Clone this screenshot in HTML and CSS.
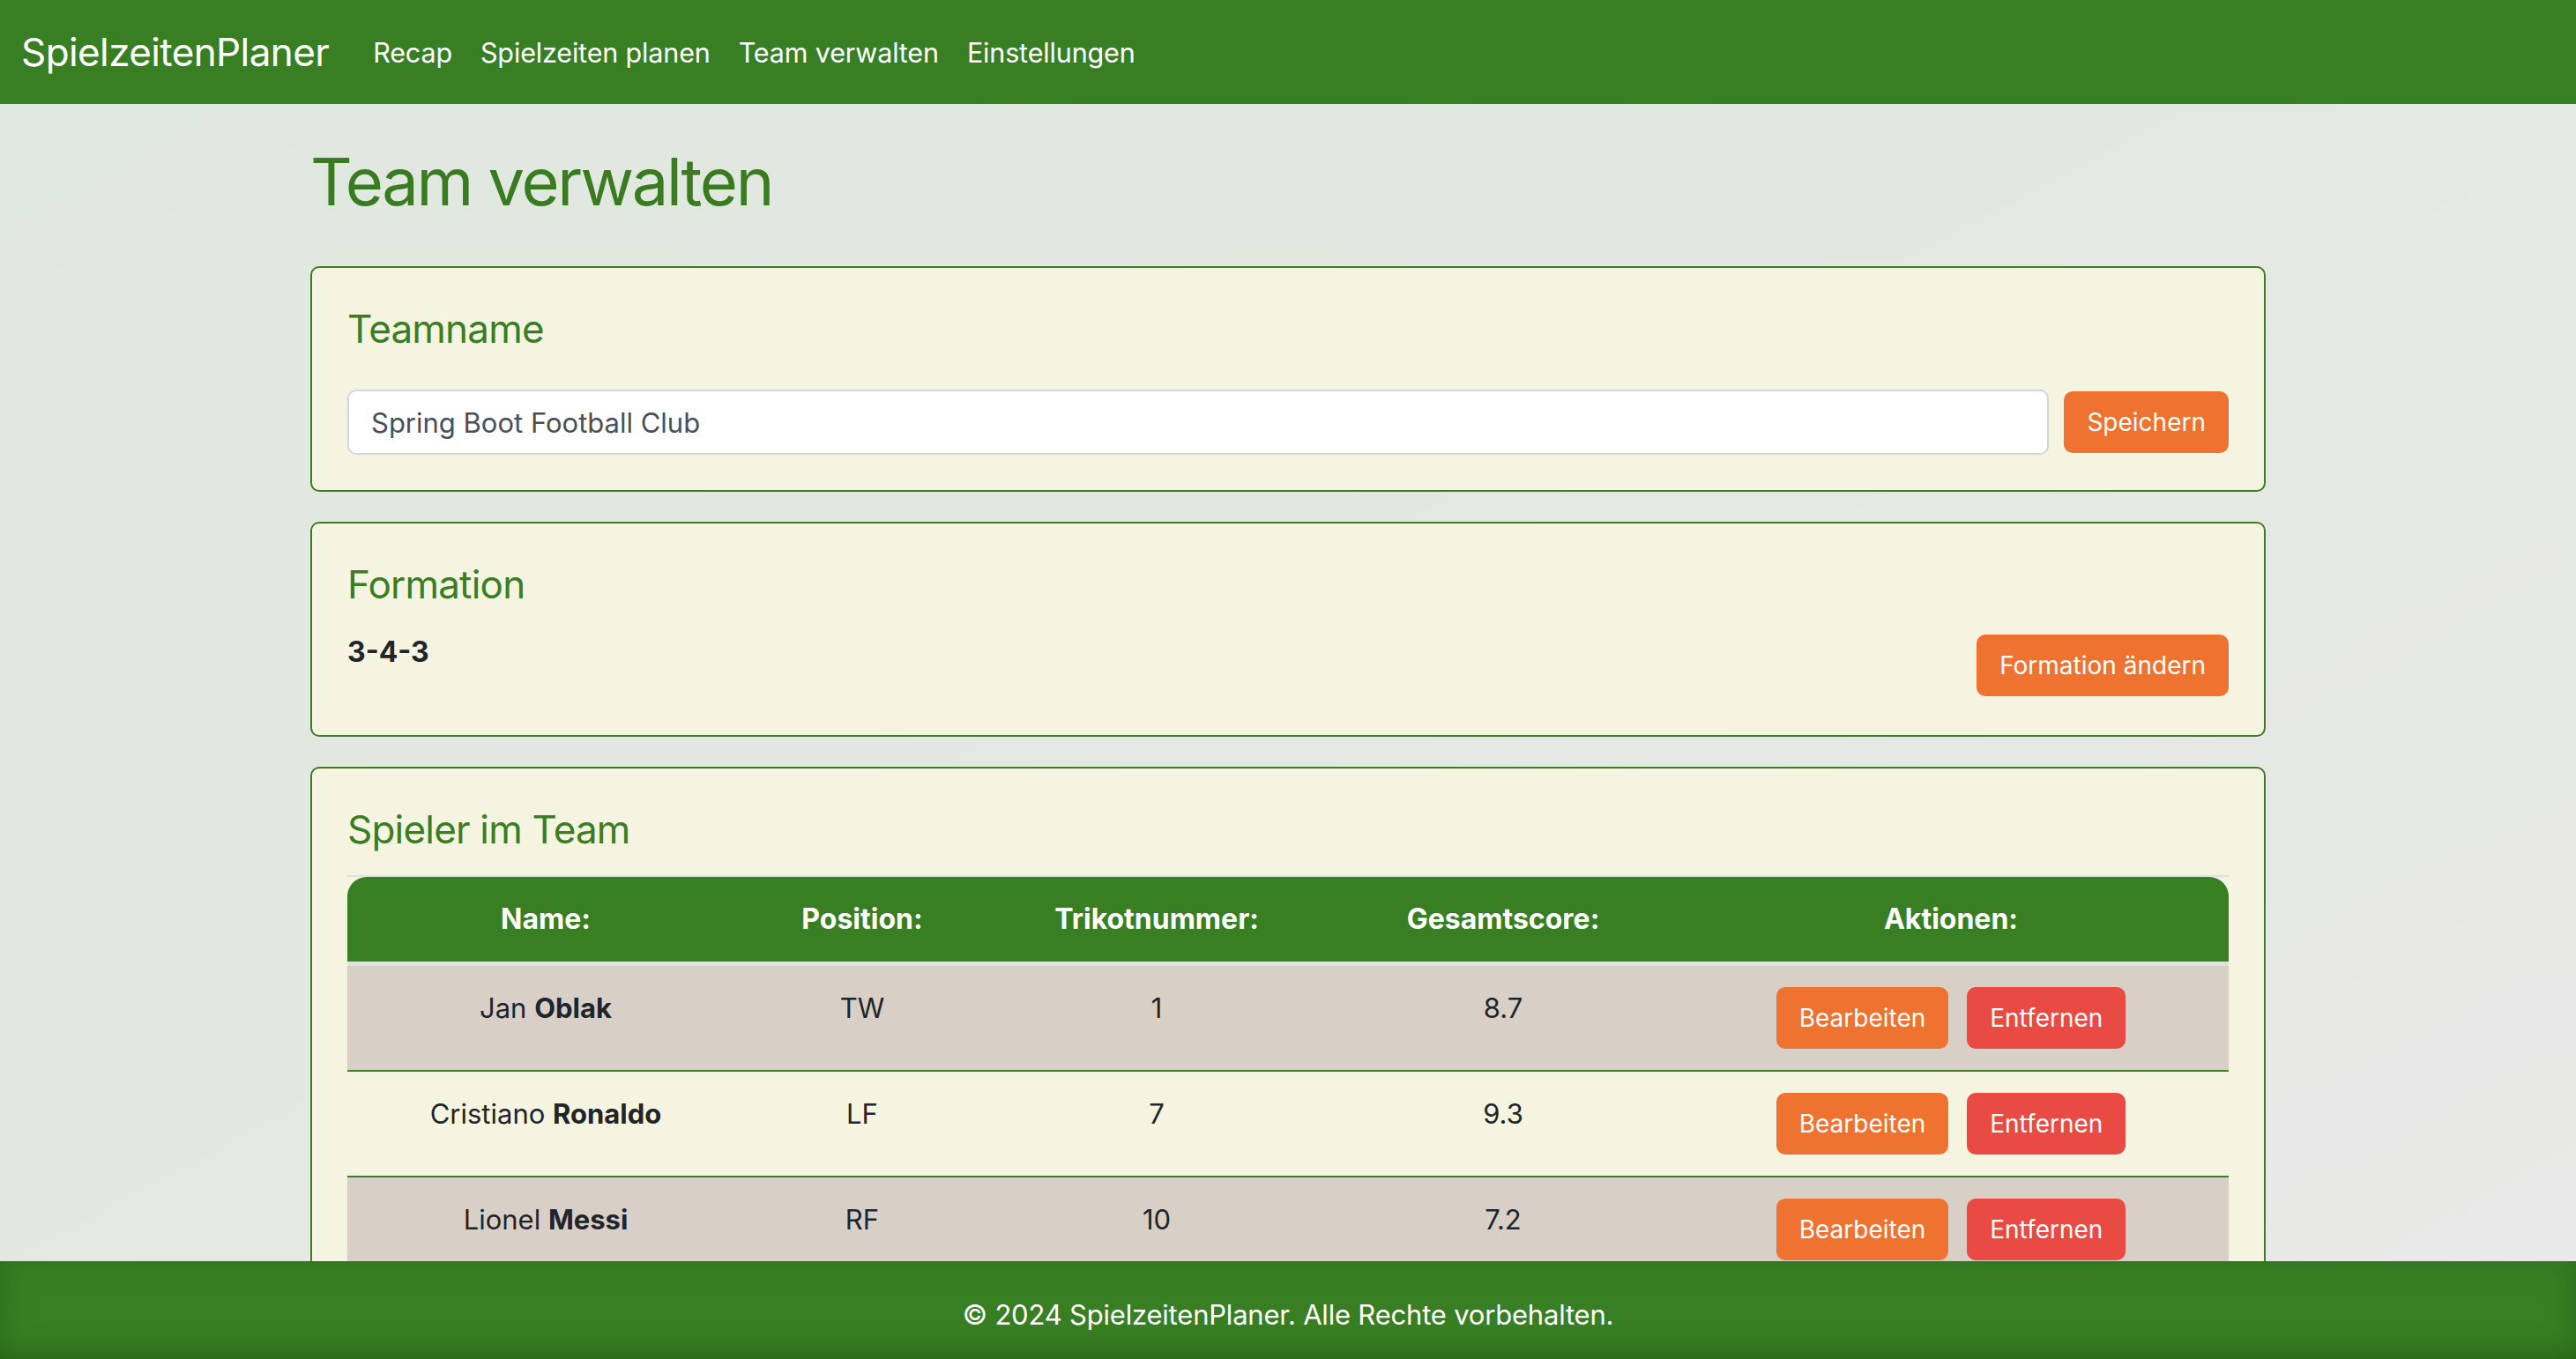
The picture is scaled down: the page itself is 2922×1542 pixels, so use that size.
FILE: index.html
```html
<!DOCTYPE html>
<html lang="de">
<head>
<meta charset="utf-8">
<title>Team verwalten - SpielzeitenPlaner</title>
<link rel="stylesheet" href="styles.css">
</head>
<body>
<nav class="navbar">
  <a class="brand" href="#">SpielzeitenPlaner</a>
  <ul class="nav">
    <li><a class="nav-link" href="#">Recap</a></li>
    <li><a class="nav-link" href="#">Spielzeiten planen</a></li>
    <li><a class="nav-link" href="#">Team verwalten</a></li>
    <li><a class="nav-link" href="#">Einstellungen</a></li>
  </ul>
</nav>

<main class="container">
  <h1 class="page-title">Team verwalten</h1>

  <section class="card card-teamname">
    <h4 class="card-title">Teamname</h4>
    <form class="name-form">
      <input class="text-input" type="text" value="Spring Boot Football Club">
      <button class="btn btn-orange" type="button">Speichern</button>
    </form>
  </section>

  <section class="card card-formation">
    <h4 class="card-title">Formation</h4>
    <div class="formation-row">
      <p class="formation-value">3-4-3</p>
      <button class="btn btn-orange" type="button">Formation ändern</button>
    </div>
  </section>

  <section class="card card-players">
    <h4 class="card-title">Spieler im Team</h4>
    <table class="players">
      <colgroup>
        <col class="c-name"><col class="c-pos"><col class="c-num"><col class="c-score"><col class="c-act">
      </colgroup>
      <thead>
        <tr><th>Name:</th><th>Position:</th><th>Trikotnummer:</th><th>Gesamtscore:</th><th>Aktionen:</th></tr>
      </thead>
      <tbody>
        <tr class="alt">
          <td>Jan <b>Oblak</b></td><td>TW</td><td>1</td><td>8.7</td>
          <td><div class="actions"><button class="btn btn-orange" type="button">Bearbeiten</button><button class="btn btn-red" type="button">Entfernen</button></div></td>
        </tr>
        <tr>
          <td>Cristiano <b>Ronaldo</b></td><td>LF</td><td>7</td><td>9.3</td>
          <td><div class="actions"><button class="btn btn-orange" type="button">Bearbeiten</button><button class="btn btn-red" type="button">Entfernen</button></div></td>
        </tr>
        <tr class="alt">
          <td>Lionel <b>Messi</b></td><td>RF</td><td>10</td><td>7.2</td>
          <td><div class="actions"><button class="btn btn-orange" type="button">Bearbeiten</button><button class="btn btn-red" type="button">Entfernen</button></div></td>
        </tr>
      </tbody>
    </table>
  </section>
</main>

<footer class="footer">© 2024 SpielzeitenPlaner. Alle Rechte vorbehalten.</footer>
</body>
</html>
```

FILE: styles.css
```css
* { box-sizing: border-box; }

html, body {
  margin: 0;
  padding: 0;
}

body {
  font-family: Inter, "Noto Sans", "Liberation Sans", sans-serif;
  color: #212529;
  min-height: 100vh;
  background: linear-gradient(to right bottom, #dee8de 0%, #e4e7e2 50%, #e9e9e9 100%);
  background-attachment: fixed;
  padding-bottom: 160px;
}

/* Navbar */
.navbar {
  height: 118px;
  background: #387f23;
  display: flex;
  align-items: center;
  padding: 0 24px;
}

.brand {
  color: #fff;
  text-decoration: none;
  font-size: 44px;
  letter-spacing: -0.6px;
  margin-right: 34px;
  line-height: 1;
}

.nav {
  list-style: none;
  display: flex;
  margin: 0;
  padding: 0;
}

.nav-link {
  display: block;
  padding: 8px 16px;
  color: #fff;
  text-decoration: none;
  font-size: 30.5px;
  letter-spacing: -0.15px;
}

/* Main */
.container {
  width: 2218px;
  margin: 0 auto;
  padding-top: 40px;
}

.page-title {
  margin: 0 0 48px;
  font-size: 74px;
  line-height: 96px;
  font-weight: 400;
  color: #3a7b22;
  letter-spacing: -2.3px;
}

.card {
  background: #f4f4e0;
  border: 2px solid #3b7d22;
  border-radius: 10px;
  padding: 40px;
  margin-bottom: 34px;
}

.card-title {
  margin: 0;
  font-size: 44px;
  line-height: 58px;
  font-weight: 400;
  color: #3a7d22;
  letter-spacing: -0.8px;
}

.card-teamname .card-title { margin-bottom: 40px; }
.card-formation .card-title { margin-bottom: 24px; }
.card-players .card-title { margin-bottom: 23px; }

.name-form {
  display: flex;
  align-items: center;
  gap: 17px;
}

.text-input {
  flex: 1;
  height: 74px;
  border: 2px solid #d3d6da;
  border-radius: 10px;
  background: #fff;
  padding: 0 25px;
  font-family: inherit;
  font-size: 31px;
  color: #4a4f55;
  outline: none;
}

.btn {
  height: 70px;
  padding: 0 26px;
  border: none;
  border-radius: 10px;
  color: #fff;
  font-family: inherit;
  font-size: 28px;
  line-height: 70px;
  cursor: pointer;
  white-space: nowrap;
}

.btn-orange { background: #ee7230; }
.btn-red { background: #e94a43; }

.formation-row {
  display: flex;
  align-items: center;
  justify-content: space-between;
}

.formation-value {
  margin: 0 0 30px;
  font-size: 32px;
  line-height: 48px;
  font-weight: 700;
}

/* Table */
.players {
  width: 100%;
  border-collapse: separate;
  border-spacing: 0;
  border-top: 2px solid #dee1e3;
  font-size: 31px;
}

.c-name { width: 450px; }
.c-pos { width: 268px; }
.c-num { width: 400px; }
.c-score { width: 386px; }

.players th {
  background: #387f23;
  color: #fff;
  font-weight: 700;
  font-size: 32px;
  padding: 24px;
  line-height: 48px;
  text-align: center;
  border-bottom: 5px solid #dfe1e2;
}

.players th:first-child { border-top-left-radius: 22px; }
.players th:last-child { border-top-right-radius: 22px; }

.players td {
  padding: 24px;
  line-height: 48px;
  text-align: center;
  vertical-align: top;
  border-bottom: 2px solid #3b7d22;
  color: #212529;
}

.players tr.alt td { background: #d8cfc6; }

.players b { font-weight: 700; }

.actions {
  display: flex;
  justify-content: center;
  gap: 21px;
}

/* Footer */
.footer {
  position: fixed;
  left: 0;
  right: 0;
  bottom: 0;
  height: 111px;
  background: #387f23;
  box-shadow: inset 0 -14px 30px -10px rgba(20, 60, 10, 0.35), inset 0 0 40px rgba(20, 60, 10, 0.12);
  color: #fff;
  font-size: 31px;
  line-height: 121px;
  overflow: hidden;
  text-align: center;
  letter-spacing: -0.2px;
}
```
